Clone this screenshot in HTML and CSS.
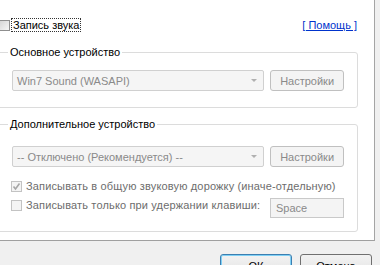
FILE: index.html
```html
<!DOCTYPE html>
<html lang="ru">
<head>
  <meta charset="UTF-8">
  <title>Запись звука</title>
  <link rel="stylesheet" href="styles.css">
</head>
<body>

<div class="page">
  <div class="top-row">
    <label class="check">
      <span class="box box-on"></span>
      <span class="focus">Запись звука</span>
    </label>
    <a class="help" href="#">[ Помощь ]</a>
  </div>

  <div class="group group-main">
    <div class="group-title">Основное устройство</div>
    <div class="device-row">
      <div class="combo"><span>Win7 Sound (WASAPI)</span><span class="arrow"></span></div>
      <button class="btn" disabled>Настройки</button>
    </div>
  </div>

  <div class="group group-extra">
    <div class="group-title">Дополнительное устройство</div>
    <div class="device-row">
      <div class="combo"><span>-- Отключено (Рекомендуется) --</span><span class="arrow"></span></div>
      <button class="btn" disabled>Настройки</button>
    </div>
    <div class="option option-mix">
      <span class="box">
        <svg width="9" height="9" viewBox="0 0 9 9"><path d="M1.5 4.5 L3.5 7 L7.5 1.5" fill="none" stroke="#a6a6a6" stroke-width="1.6"/></svg>
      </span>
      <span>Записывать в общую звуковую дорожку (иначе-отдельную)</span>
    </div>
    <div class="option option-key">
      <span class="box"></span>
      <span>Записывать только при удержании клавиши:</span>
      <span class="key">Space</span>
    </div>
  </div>
</div>

<div class="footer">
  <button class="btn-main btn-ok">ОК</button>
  <button class="btn-main">Отмена</button>
</div>

</body>
</html>
```

FILE: styles.css
```css
body {
  margin: 0;
  width: 380px;
  height: 265px;
  overflow: hidden;
  background-color: #f0f0f0;
  font-family: "Liberation Sans", Arial, sans-serif;
  font-size: 11px;
  color: #1e1e1e;
}

.page {
  width: 374px;
  height: 240px;
  background-color: #fff;
  border-right: 1px solid #a5a5a5;
  border-bottom: 1px solid #a0a0a0;
  overflow: hidden;
}

.top-row {
  display: flex;
  align-items: center;
  height: 14px;
  margin-top: 18px;
  padding-right: 17px;
}

.check {
  display: flex;
  align-items: center;
  margin-left: -1px;
}

.box {
  display: inline-flex;
  align-items: center;
  justify-content: center;
  width: 9px;
  height: 9px;
  border: 1px solid #c3c3c3;
  background-color: #f4f4f4;
  flex: none;
}

.box-on {
  border-color: #8f8f8f;
  background: linear-gradient(135deg, #d6d6d6, #f6f6f6);
}

.focus {
  margin-left: 2px;
  padding: 0 1px;
  line-height: 12px;
  outline: 1px dotted #333;
  color: #000;
}

.help {
  margin-left: auto;
  color: #0033cc;
  text-decoration: underline;
}

.group {
  margin-left: -3px;
  width: 361px;
  box-sizing: border-box;
  border: 1px solid #dcdcdc;
  border-radius: 3px;
  padding: 0 13px 0 14px;
}

.group-title {
  width: fit-content;
  margin: -8px 0 0 -4px;
  padding: 0 2px;
  line-height: 14px;
  background-color: #fff;
  color: #000;
}

.group-main {
  margin-top: 20px;
  padding-bottom: 16px;
}

.group-extra {
  margin-top: 16px;
  padding-bottom: 13px;
}

.device-row {
  display: flex;
  gap: 6px;
  margin-top: 11px;
}

.group-extra .device-row {
  margin-top: 15px;
}

.combo {
  display: flex;
  align-items: center;
  width: 253px;
  height: 21px;
  box-sizing: border-box;
  padding: 0 6px 0 4px;
  border: 1px solid #d0d0d0;
  border-radius: 2px;
  background-color: #f5f5f5;
  color: #8a8a8a;
}

.arrow {
  margin-left: auto;
  width: 0;
  height: 0;
  border-left: 3px solid transparent;
  border-right: 3px solid transparent;
  border-top: 3px solid #b0b0b0;
}

.btn {
  width: 74px;
  height: 21px;
  padding: 0;
  border: 1px solid #c0c0c0;
  border-radius: 3px;
  background-color: #f4f4f4;
  font: inherit;
  color: #8a8a8a;
}

.option {
  display: flex;
  align-items: flex-start;
  gap: 4px;
  margin-left: -1px;
  line-height: 13px;
  white-space: nowrap;
  letter-spacing: 0.15px;
  color: #6d6d6d;
}

.option .box {
  margin-top: 1px;
}

.option-mix {
  margin-top: 13px;
}

.option-key {
  margin-top: 6px;
}

.key {
  margin: -1px 0 0 auto;
  width: 74px;
  height: 20px;
  box-sizing: border-box;
  padding: 0 5px;
  border: 1px solid #c9c9c9;
  background-color: #f4f4f4;
  line-height: 18px;
  letter-spacing: 0;
  color: #8a8a8a;
}

.footer {
  display: flex;
  justify-content: flex-end;
  gap: 8px;
  padding: 13px 8px 0 0;
}

.btn-main {
  width: 72px;
  height: 23px;
  padding: 0;
  border: 1px solid #707070;
  border-radius: 3px;
  background: linear-gradient(#f2f2f2, #ebebeb 50%, #dddddd 51%, #cfcfcf);
  font: inherit;
  color: #000;
}

.btn-ok {
  border-color: #3c7fb1;
  box-shadow: inset 0 0 0 1px #7fd0f5;
}
```
